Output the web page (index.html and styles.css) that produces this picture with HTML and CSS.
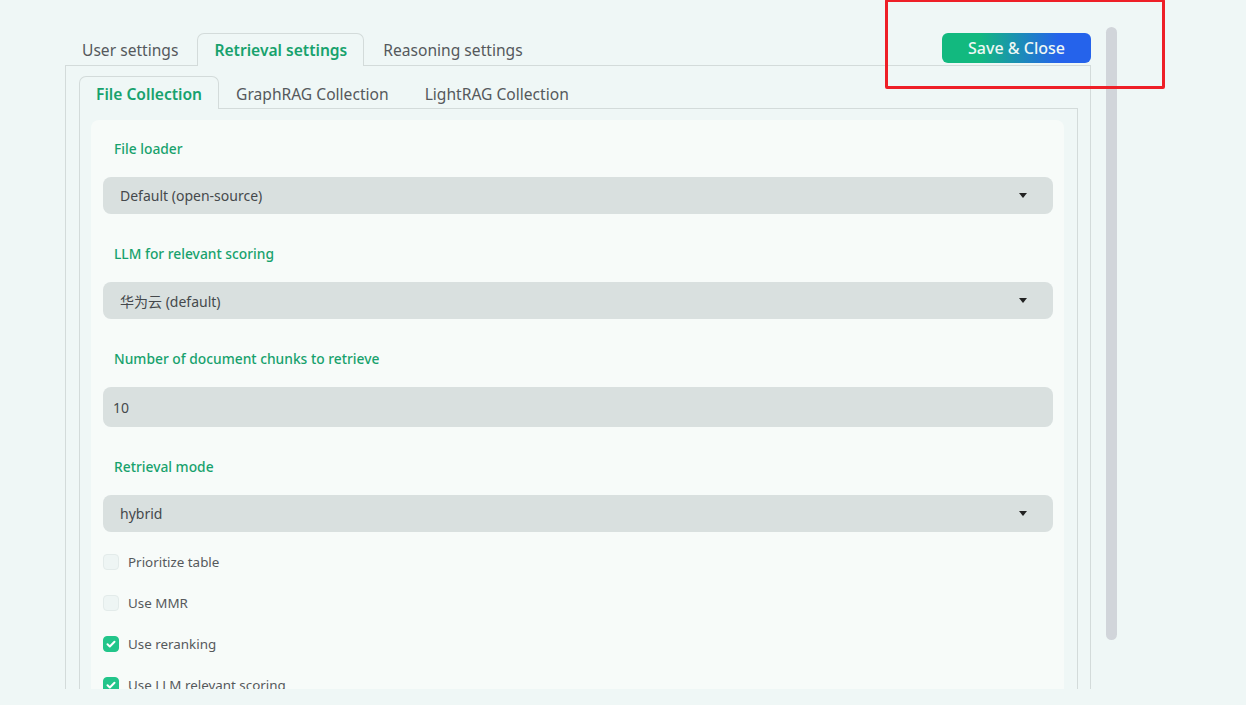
FILE: index.html
```html
<!DOCTYPE html>
<html>
<head>
<meta charset="utf-8">
<link rel="stylesheet" href="styles.css">
</head>
<body>
<div class="viewport">
  <div class="main">
    <div class="tabbar">
      <div class="tabs">
        <div class="tab">User settings</div>
        <div class="tab active">Retrieval settings</div>
        <div class="tab">Reasoning settings</div>
      </div>
      <button class="save">Save &amp; Close</button>
    </div>
    <div class="panel">
      <div class="tabs sub">
        <div class="tab active">File Collection</div>
        <div class="tab">GraphRAG Collection</div>
        <div class="tab">LightRAG Collection</div>
      </div>
      <div class="subpanel">
        <div class="card">
          <div class="field">
            <div class="label">File loader</div>
            <div class="select"><span>Default (open-source)</span><i class="caret"></i></div>
          </div>
          <div class="field">
            <div class="label">LLM for relevant scoring</div>
            <div class="select"><span>华为云 (default)</span><i class="caret"></i></div>
          </div>
          <div class="field">
            <div class="label">Number of document chunks to retrieve</div>
            <div class="select input"><span>10</span></div>
          </div>
          <div class="field">
            <div class="label">Retrieval mode</div>
            <div class="select"><span>hybrid</span><i class="caret"></i></div>
          </div>
          <div class="checks">
            <div class="check"><span class="box"></span>Prioritize table</div>
            <div class="check"><span class="box"></span>Use MMR</div>
            <div class="check"><span class="box on"><svg viewBox="0 0 16 16" width="16" height="16"><path d="M4.5 8.3l2.3 2.2 4.7-4.8" fill="none" stroke="#fff" stroke-width="2" stroke-linecap="round" stroke-linejoin="round"/></svg></span>Use reranking</div>
            <div class="check"><span class="box on"><svg viewBox="0 0 16 16" width="16" height="16"><path d="M4.5 8.3l2.3 2.2 4.7-4.8" fill="none" stroke="#fff" stroke-width="2" stroke-linecap="round" stroke-linejoin="round"/></svg></span>Use LLM relevant scoring</div>
          </div>
        </div>
      </div>
    </div>
  </div>
  <div class="scrolltrack"><div class="thumb"></div></div>
</div>
<div class="highlight"></div>
</body>
</html>
```
FILE: styles.css
```css
html, body {
  margin: 0;
  padding: 0;
  background: #eff7f6;
  font-family: "Noto Sans", "Noto Sans CJK SC", sans-serif;
  color: #4b4f52;
}
.viewport {
  height: 689px;
  overflow: hidden;
  display: flex;
  padding-left: 65px;
}
.main {
  width: 1026px;
  padding-top: 33px;
}
.tabbar {
  display: flex;
  justify-content: space-between;
  align-items: flex-start;
}
.tabs {
  display: flex;
  gap: 2px;
}
.tab {
  height: 32px;
  line-height: 33px;
  padding: 0 16px;
  font-size: 15.6px;
  color: #55595c;
  border: 1px solid transparent;
  border-bottom: none;
  box-sizing: border-box;
  border-radius: 7px 7px 0 0;
  margin-bottom: -1px;
}
.sub .tab {
  line-height: 34px;
}
.sub .tab:nth-child(2) {
  margin-left: -2px;
}
.tab.active {
  border-color: #d3dbda;
  background: #eff7f6;
  color: #17a26d;
  font-weight: 600;
  height: 33px;
  position: relative;
}
.save {
  width: 149px;
  height: 30px;
  border: none;
  border-radius: 6px;
  background: linear-gradient(90deg, #12b97f 25%, #2563eb 78%);
  color: #eef8f4;
  font-family: inherit;
  font-size: 16px;
  font-weight: 500;
  padding: 0;
}
.panel {
  border: 1px solid #d3dbda;
  border-bottom: none;
  padding: 10px 12px 0 13px;
  height: 700px;
  box-sizing: border-box;
}
.subpanel {
  border: 1px solid #d3dbda;
  border-bottom: none;
  padding: 11px 13px 0 11px;
  height: 700px;
  box-sizing: border-box;
}
.card {
  background: #f7fbf9;
  border-radius: 8px;
  padding: 18px 11px 30px 12px;
  height: 700px;
  box-sizing: border-box;
}
.field {
  margin-bottom: 29px;
}
.label {
  font-size: 13.8px;
  font-weight: 500;
  color: #17a26d;
  line-height: 20px;
  padding-top: 1px;
  padding-left: 11px;
  margin-bottom: 18px;
}
.select {
  height: 37px;
  background: #d9e0df;
  border-radius: 8px;
  display: flex;
  align-items: center;
  justify-content: space-between;
  padding: 0 26px 0 17px;
  font-size: 14px;
  color: #45494c;
}
.select.input {
  height: 40px;
  padding-left: 10px;
}
.caret {
  width: 0;
  height: 0;
  border-left: 4px solid transparent;
  border-right: 4px solid transparent;
  border-top: 5px solid #222;
}
.checks {
  margin-top: -9px;
  display: flex;
  flex-direction: column;
  gap: 21px;
}
.check {
  display: flex;
  align-items: center;
  height: 20px;
  font-size: 13.4px;
  color: #55595c;
}
.box {
  width: 16px;
  height: 16px;
  box-sizing: border-box;
  border: 1px solid #e3ebea;
  background: #eef5f4;
  border-radius: 4px;
  margin-right: 9px;
  display: flex;
}
.box.on {
  background: #22c58a;
  border-color: #22c58a;
}
.box.on svg {
  margin: -1px;
}
.scrolltrack {
  margin-left: 15px;
  padding-top: 27px;
}
.thumb {
  width: 11px;
  height: 613px;
  background: #d1d5da;
  border-radius: 6px;
}
.highlight {
  position: absolute;
  left: 885px;
  top: -1px;
  width: 274px;
  height: 84px;
  border: 3px solid #ee1f27;
  border-radius: 2px;
  pointer-events: none;
}
```
